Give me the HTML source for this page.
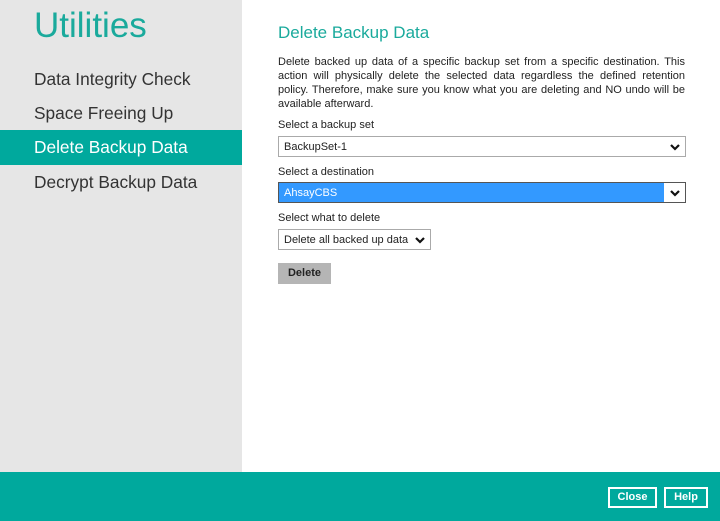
<!DOCTYPE html>
<html><head><style>
*{margin:0;padding:0;box-sizing:border-box}
body{width:720px;height:521px;position:relative;background:#fff;font-family:"Liberation Sans","DejaVu Sans",sans-serif;overflow:hidden}
.side{position:absolute;left:0;top:0;width:242px;height:472px;background:#e6e6e6}
.title{position:absolute;left:34px;top:6px;font-size:35px;color:#1aaa9c;font-weight:300}
.item{position:absolute;left:0;width:242px;height:35px;line-height:35px;padding-left:34px;font-size:17.3px;color:#333}
.sel{background:#00a99d;color:#fff}
.foot{position:absolute;left:0;top:472px;width:720px;height:49px;background:#00a99d}
.fb{position:absolute;top:15px;height:21px;border:2px solid #fff;color:#fff;font-size:11px;font-weight:bold;text-align:center;line-height:17px}
h1{position:absolute;left:278px;top:23px;font-size:17px;font-weight:normal;color:#1aaa9c}
p{position:absolute;left:278px;top:55px;width:407px;font-size:11px;line-height:14px;color:#222;text-align:justify}
.lb{position:absolute;left:278px;font-size:11px;color:#222}
.s{position:absolute;left:278px;height:21px;border:1px solid #aaa;background:#fff;font-size:11px;line-height:21px;padding-left:5px;color:#222}
.s svg{position:absolute;right:5px;top:6px}
.btn{position:absolute;left:278px;top:263px;width:53px;height:21px;background:#b5b5b5;font-size:11px;font-weight:bold;text-align:center;line-height:21px;color:#222}
</style></head><body>
<div class="side">
<div class="title">Utilities</div>
<div class="item" style="top:62px">Data Integrity Check</div>
<div class="item" style="top:96px">Space Freeing Up</div>
<div class="item sel" style="top:130px">Delete Backup Data</div>
<div class="item" style="top:165px">Decrypt Backup Data</div>
</div>
<h1>Delete Backup Data</h1>
<p>Delete backed up data of a specific backup set from a specific destination. This action will physically delete the selected data regardless the defined retention policy. Therefore, make sure you know what you are deleting and NO undo will be available afterward.</p>
<div class="lb" style="top:119px">Select a backup set</div>
<div class="s" style="top:136px;width:408px">BackupSet-1<svg width="10" height="8" viewBox="0 0 10 8"><path d="M1 2l4 4 4-4" stroke="#111" stroke-width="2.2" fill="none"/></svg></div>
<div class="lb" style="top:166px">Select a destination</div>
<div class="s" style="top:182px;width:408px;background:#3399ff;color:#fff;border-color:#555">AhsayCBS<span style="position:absolute;right:0;top:0;width:21px;height:19px;background:#fff"></span><svg width="10" height="8" viewBox="0 0 10 8"><path d="M1 2l4 4 4-4" stroke="#111" stroke-width="2.2" fill="none"/></svg></div>
<div class="lb" style="top:212px">Select what to delete</div>
<div class="s" style="top:229px;width:153px">Delete all backed up data<svg width="10" height="8" viewBox="0 0 10 8"><path d="M1 2l4 4 4-4" stroke="#111" stroke-width="2.2" fill="none"/></svg></div>
<div class="btn">Delete</div>
<div class="foot">
<div class="fb" style="left:608px;width:49px">Close</div>
<div class="fb" style="left:664px;width:44px">Help</div>
</div>
</body></html>
